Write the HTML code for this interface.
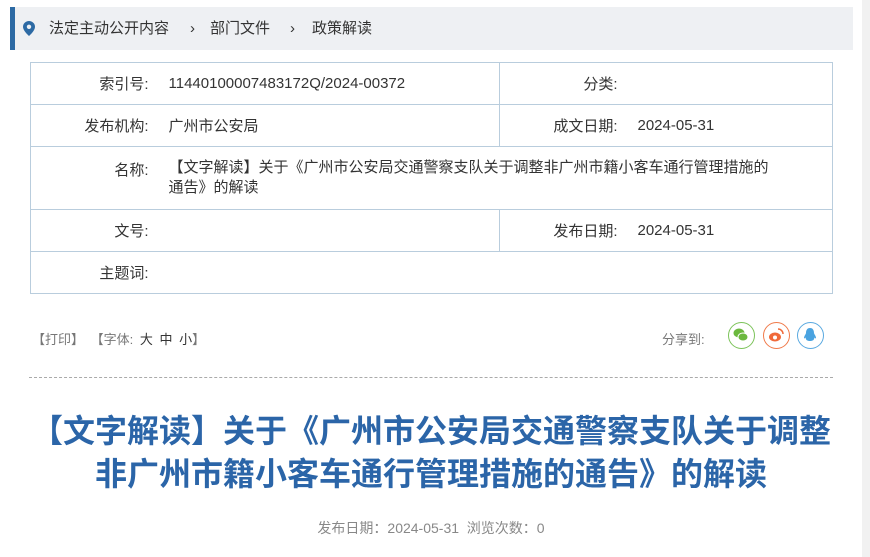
<!DOCTYPE html>
<html><head><meta charset="utf-8"><style>
*{margin:0;padding:0;box-sizing:border-box}
body{width:870px;height:557px;background:#fff;font-family:"Liberation Sans","Noto Sans CJK SC",sans-serif;position:relative;overflow:hidden;color:#333}
.sb{position:absolute;left:862px;top:0;width:8px;height:557px;background:#f1f1f1}
.bc{position:absolute;left:10px;top:7px;width:843px;height:43px;background:#eef0f3;border-left:5px solid #2d6aa4;font-size:15px;line-height:43px;color:#333}
.bc span{position:absolute;top:0}
table{position:absolute;left:30px;top:62px;width:803px;border-collapse:collapse;font-size:15px;color:#333;table-layout:fixed}
td{border:1px solid #b9cddd;padding:0;vertical-align:middle}
.l{text-align:right;padding-right:18px;border-right:none}
.v{padding-left:2px;border-left:none}
.tools{position:absolute;left:32px;top:329px;font-size:13px;color:#777;word-spacing:3px}
.share{position:absolute;left:662px;top:329px;font-size:13px;color:#777}
.ic{position:absolute;top:322px;width:27px;height:27px;border-radius:50%;border:1.5px solid}
.dash{position:absolute;left:29px;top:377px;width:804px;border-top:1px dashed #aaa}
h1{position:absolute;left:0;width:862px;top:410px;text-align:center;font-size:32px;line-height:43px;color:#2b65a8;font-weight:bold}
.meta{position:absolute;left:0;width:862px;top:518px;text-align:center;font-size:14px;color:#888}
</style></head><body>
<div class="sb"></div>
<div class="bc">
<svg style="position:absolute;left:8px;top:14px" width="12" height="15" viewBox="0 0 12 15"><path d="M6 0C2.7 0 0 2.6 0 5.8 0 10 6 15 6 15s6-5 6-9.2C12 2.6 9.3 0 6 0z" fill="#2d6aa4"/><circle cx="6" cy="5.8" r="2.2" fill="#eef0f3"/></svg>
<span style="left:34px">法定主动公开内容</span><span style="left:175px">›</span>
<span style="left:195px">部门文件</span><span style="left:275px">›</span>
<span style="left:297px">政策解读</span>
</div>
<table>
<colgroup><col style="width:136px"><col style="width:333px"><col style="width:136px"><col></colgroup>
<tr style="height:42px"><td class="l">索引号:</td><td class="v">11440100007483172Q/2024-00372</td><td class="l">分类:</td><td class="v"></td></tr>
<tr style="height:42px"><td class="l">发布机构:</td><td class="v">广州市公安局</td><td class="l">成文日期:</td><td class="v">2024-05-31</td></tr>
<tr style="height:63px"><td class="l" style="vertical-align:top;padding-top:12px">名称:</td><td class="v" colspan="3" style="line-height:20px;white-space:nowrap">【文字解读】关于《广州市公安局交通警察支队关于调整非广州市籍小客车通行管理措施的<br>通告》的解读</td></tr>
<tr style="height:42px"><td class="l">文号:</td><td class="v"></td><td class="l">发布日期:</td><td class="v">2024-05-31</td></tr>
<tr style="height:42px"><td class="l">主题词:</td><td class="v" colspan="3"></td></tr>
</table>
<div class="tools">【打印】 【字体: <span style="color:#333">大 中 小</span>】</div>
<div class="share">分享到:</div>
<div class="ic" style="left:728px;border-color:#7cc35a"><svg width="24" height="24" viewBox="0 0 24 24"><ellipse cx="10" cy="10" rx="5.5" ry="4.5" fill="#6bb83e"/><ellipse cx="14" cy="14" rx="5" ry="4" fill="#6bb83e" stroke="#fff" stroke-width="1"/></svg></div>
<div class="ic" style="left:763px;border-color:#f07a4a"><svg width="24" height="24" viewBox="0 0 24 24"><ellipse cx="11" cy="14" rx="6" ry="4.5" fill="#f06a3a"/><circle cx="11" cy="14.5" r="2" fill="#fff"/><path d="M14 6a5 5 0 0 1 5 5" stroke="#f06a3a" stroke-width="1.5" fill="none"/></svg></div>
<div class="ic" style="left:797px;border-color:#5aa9e0"><svg width="24" height="24" viewBox="0 0 24 24"><path d="M12 5c-3 0-4 2.5-4 5 0 1-2 3-2 5 0 1 1 0 1.5-.5C8 17 9 18 12 18s4-1 4.5-3.5c.5.5 1.5 1.5 1.5.5 0-2-2-4-2-5 0-2.5-1-5-4-5z" fill="#4aa3e0"/></svg></div>
<div class="dash"></div>
<h1>【文字解读】关于《广州市公安局交通警察支队关于调整<br>非广州市籍小客车通行管理措施的通告》的解读</h1>
<div class="meta">发布日期：2024-05-31&nbsp;&nbsp;浏览次数：0</div>
</body></html>
